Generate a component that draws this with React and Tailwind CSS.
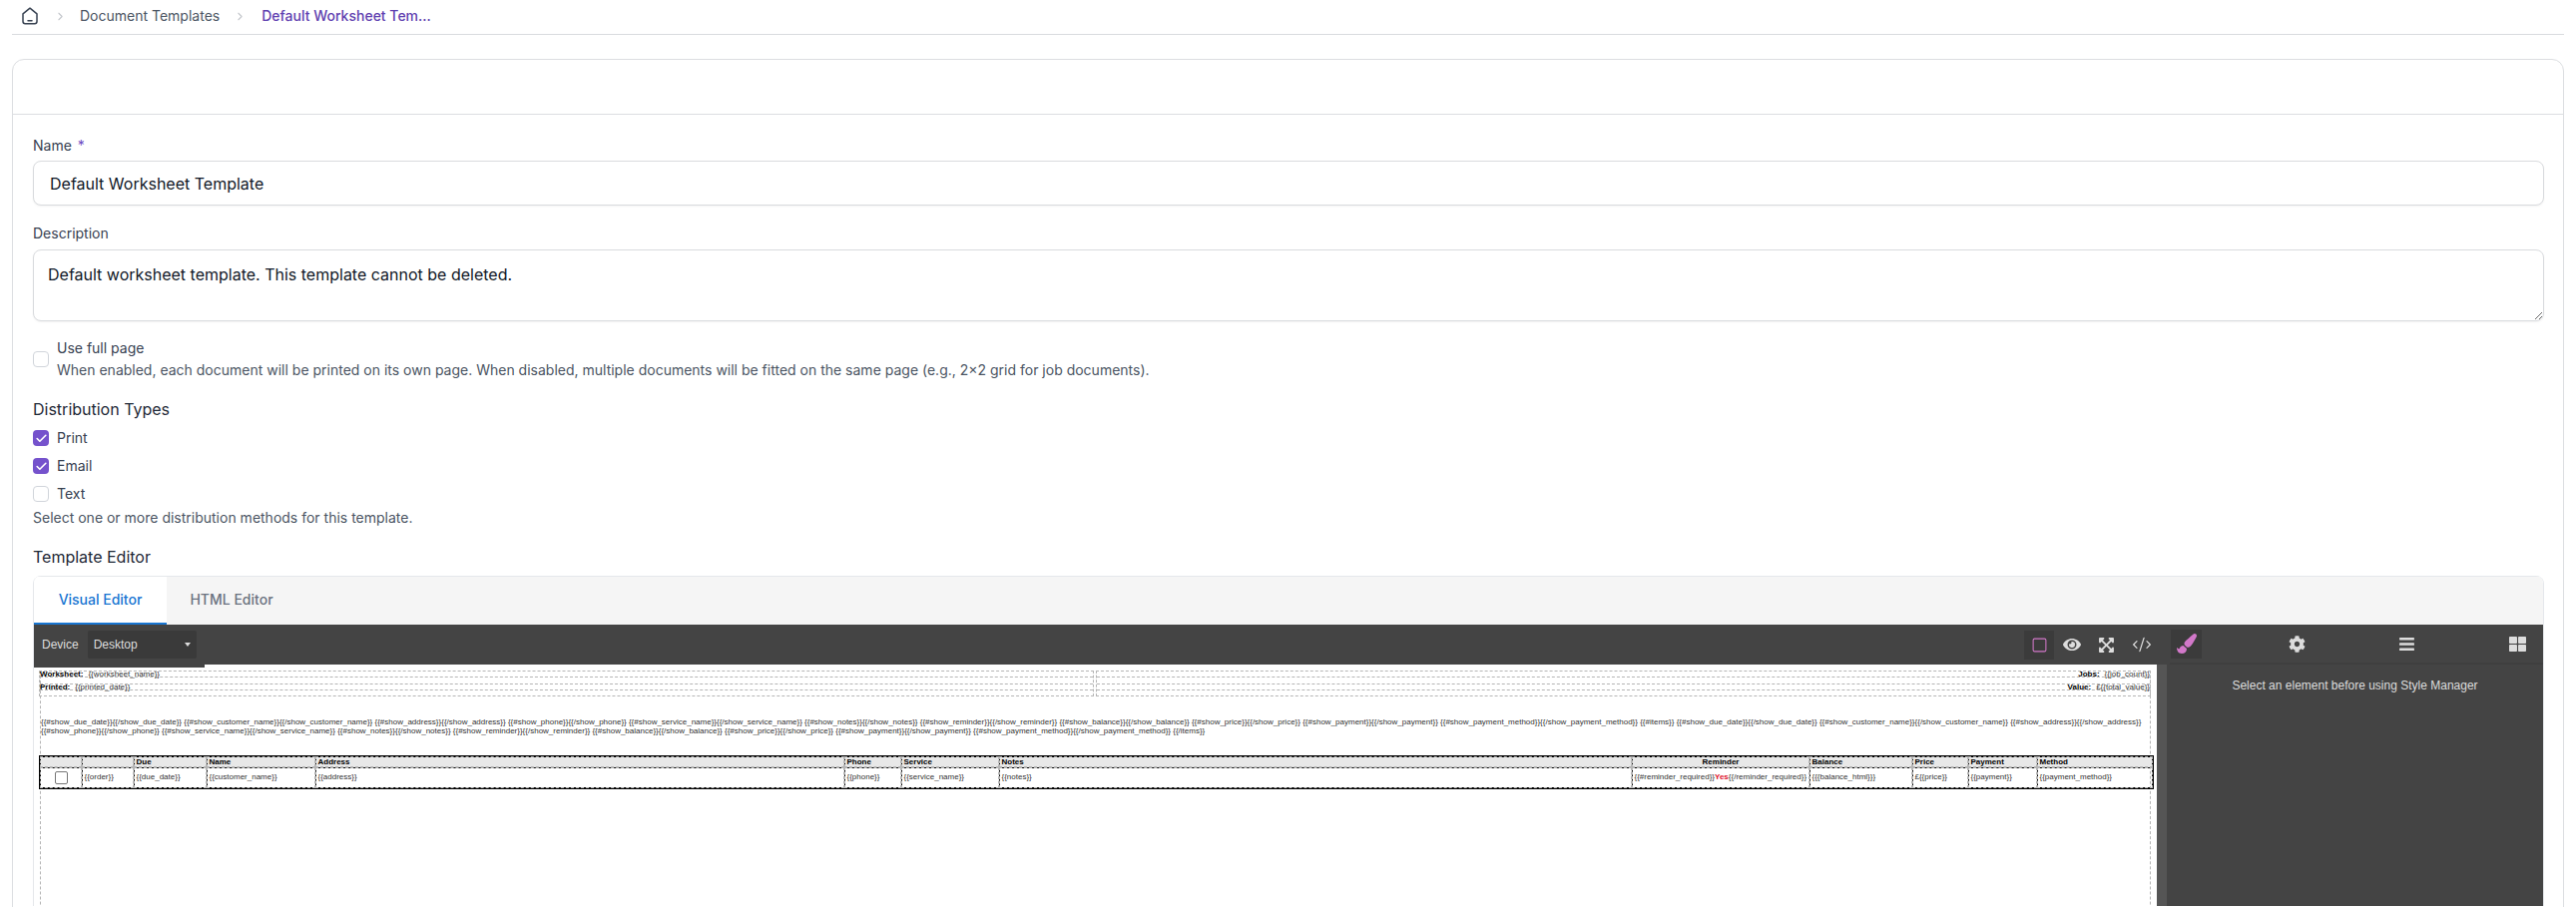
import React from 'react';
import { ChevronRight, Check, Square, CodeXml } from 'lucide-react';
import { FaEye, FaExpandArrowsAlt, FaPaintBrush, FaCog, FaBars, FaThLarge } from 'react-icons/fa';

const sans = "font-['Inter',sans-serif]";
const arial = "font-['Liberation_Sans',sans-serif]";

const columns = [
  { title: '', width: 'w-[42px]', cell: null },
  { title: '', width: 'w-[52px]', cell: '{{order}}' },
  { title: 'Due', width: 'w-[73px]', cell: '{{due_date}}' },
  { title: 'Name', width: 'w-[109px]', cell: '{{customer_name}}' },
  { title: 'Address', width: 'w-[530px]', cell: '{{address}}' },
  { title: 'Phone', width: 'w-[57px]', cell: '{{phone}}' },
  { title: 'Service', width: 'w-[98px]', cell: '{{service_name}}' },
  { title: 'Notes', width: 'w-[634px]', cell: '{{notes}}' },
  { title: 'Reminder', width: 'w-[178px]', center: true },
  { title: 'Balance', width: 'w-[103px]', cell: '{{{balance_html}}}' },
  { title: 'Price', width: 'w-[56px]', cell: '£{{price}}' },
  { title: 'Payment', width: 'w-[69px]', cell: '{{payment}}' },
  { title: 'Method', width: 'w-[116px]', cell: '{{payment_method}}' },
];

const lineOne =
  '{{#show_due_date}}{{/show_due_date}} {{#show_customer_name}}{{/show_customer_name}} {{#show_address}}{{/show_address}} {{#show_phone}}{{/show_phone}} {{#show_service_name}}{{/show_service_name}} {{#show_notes}}{{/show_notes}} {{#show_reminder}}{{/show_reminder}} {{#show_balance}}{{/show_balance}} {{#show_price}}{{/show_price}} {{#show_payment}}{{/show_payment}} {{#show_payment_method}}{{/show_payment_method}} {{#items}} {{#show_due_date}}{{/show_due_date}} {{#show_customer_name}}{{/show_customer_name}} {{#show_address}}{{/show_address}}';
const lineTwo =
  '{{#show_phone}}{{/show_phone}} {{#show_service_name}}{{/show_service_name}} {{#show_notes}}{{/show_notes}} {{#show_reminder}}{{/show_reminder}} {{#show_balance}}{{/show_balance}} {{#show_price}}{{/show_price}} {{#show_payment}}{{/show_payment}} {{#show_payment_method}}{{/show_payment_method}} {{/items}}';

function HomeIcon() {
  return (
    <svg width="18" height="18" viewBox="0 0 18 18" fill="none" stroke="#374151" strokeWidth="1.5" strokeLinejoin="round" strokeLinecap="round">
      <path d="M2 6.8 9 1.2l7 5.6v7.7a2.2 2.2 0 0 1-2.2 2.2H4.200a2.200 2.200 0 0 1-2.200-2.200z" />
      <path d="M7 13.800h4" />
    </svg>
  );
}

function Box({ checked }) {
  if (checked) {
    return (
      <span className="flex h-4 w-4 items-center justify-center rounded-[4px] bg-[#7552cc]">
        <Check size={13} strokeWidth={3} color="#fff" />
      </span>
    );
  }
  return <span className="h-4 w-4 rounded-[4px] border border-[#d1d5db] bg-white" />;
}

function CheckRow({ label, checked }) {
  return (
    <label className="flex h-5 items-center gap-2 text-sm text-[#374151]">
      <Box checked={checked} />
      <span>{label}</span>
    </label>
  );
}

function SummaryCell({ rows }) {
  return (
    <div className="h-[26px] flex-1 border border-dashed border-[#b5b5b5]">
      {rows.map((row) => (
        <div key={row.label} className="h-[13px] border-b border-dashed border-[#b5b5b5] last:h-[11px] last:border-b-0">
          <div className={`flex h-[6px] items-center gap-[5px] border-b border-dashed border-[#b5b5b5] leading-[6px] ${row.right ? 'justify-end' : ''}`}>
            <b className="text-black">{row.label}</b>
            <span>{row.value}</span>
          </div>
        </div>
      ))}
    </div>
  );
}

function WorksheetCanvas() {
  return (
    <div className={`min-w-0 flex-1 overflow-hidden bg-white px-[6px] pt-[6px] ${arial} text-[8px] text-[#333]`}>
      <div className="h-[300px] border-x border-dashed border-[#b5b5b5]">
        <div className="-ml-[2px] flex w-[2116px] gap-[2px]">
          <SummaryCell rows={[
            { label: 'Worksheet:', value: '{{worksheet_name}}' },
            { label: 'Printed:', value: '{{printed_date}}' },
          ]} />
          <SummaryCell rows={[
            { label: 'Jobs:', value: '{{job_count}}', right: true },
            { label: 'Value:', value: '£{{total_value}}', right: true },
          ]} />
        </div>
        <div className="mt-[21px] whitespace-nowrap leading-[9px]">
          <div>{lineOne}</div>
          <div>{lineTwo}</div>
        </div>
        <table className="-ml-[2px] mt-[20px] w-[2117px] table-fixed border-collapse border-2 border-black">
          <thead>
            <tr className="h-[11px] bg-[#e8e8e8]">
              {columns.map((col, i) => (
                <th
                  key={i}
                  className={`${col.width} overflow-hidden border border-black px-[2px] py-0 text-[8px] leading-[9px] font-bold text-black outline-1 -outline-offset-1 outline-dashed outline-[#b5b5b5] ${col.center ? 'text-center' : 'text-left'}`}
                >
                  {col.title}
                </th>
              ))}
            </tr>
          </thead>
          <tbody>
            <tr className="h-[21px]">
              {columns.map((col, i) => (
                <td key={i} className="overflow-hidden border border-black px-[2px] py-0 whitespace-nowrap outline-1 -outline-offset-1 outline-dashed outline-[#b5b5b5]">
                  {i === 0 ? (
                    <span className="mx-auto block h-[13px] w-[13px] rounded-[2px] border border-[#777] bg-white" />
                  ) : col.center ? (
                    <span>
                      {'{{#reminder_required}}'}
                      <b className="text-[#e0102a]">Yes</b>
                      {'{{/reminder_required}}'}
                    </span>
                  ) : (
                    col.cell
                  )}
                </td>
              ))}
            </tr>
          </tbody>
        </table>
      </div>
    </div>
  );
}

function Editor() {
  return (
    <div className={`flex h-[282px] flex-col bg-[#444444] ${arial}`}>
      <div className="flex h-[40px] shrink-0 items-start">
        <div className="relative z-10 flex h-[43px] w-[171px] items-center gap-[9px] bg-[#444444] pl-[8px] pb-[3px] text-[12px] text-[#dddddd]">
          <span>Device</span>
          <div className="flex h-[28px] w-[109px] items-center justify-between rounded-[2px] bg-[#3a3a3a] px-[6px]">
            <span>Desktop</span>
            <span className="h-0 w-0 border-x-[3px] border-t-[4px] border-x-transparent border-t-[#dddddd]" />
          </div>
        </div>
        <div className="flex h-full flex-1 items-center justify-end pr-[11px]">
          <span className="flex h-[29px] w-[30px] items-center justify-center bg-[#3b3b3b]">
            <Square size={17} color="#d278c9" strokeWidth={1.5} />
          </span>
          <span className="flex w-[35px] justify-center text-[#dddddd]"><FaEye size={18} /></span>
          <span className="flex w-[35px] justify-center text-[#dddddd]"><FaExpandArrowsAlt size={17} /></span>
          <span className="flex w-[35px] justify-center text-[#dddddd]"><CodeXml size={20} strokeWidth={1.5} /></span>
        </div>
        <div className="flex h-full w-[374px] shrink-0 items-center border-b-2 border-[#3f3f3f] pl-px text-[#dddddd]">
          <span className="flex h-[29px] w-[31px] items-center justify-center bg-[#3b3b3b]">
            <FaPaintBrush size={20} color="#d278c9" />
          </span>
          <span className="ml-[87px]"><FaCog size={17} /></span>
          <span className="ml-[93px]"><FaBars size={17} /></span>
          <span className="ml-[94px]"><FaThLarge size={17} /></span>
        </div>
      </div>
      <div className="flex min-h-0 flex-1">
        <WorksheetCanvas />
        <div className="w-[10px] shrink-0 bg-[#555555]" />
        <div className="w-[377px] shrink-0 pt-[14px] text-center text-[12px] leading-[14px] text-[#dddddd]">
          Select an element before using Style Manager
        </div>
      </div>
    </div>
  );
}

export default function App() {
  return (
    <div className={`h-[909px] w-full overflow-hidden bg-white px-3 ${sans}`}>
      <nav className="flex h-[35px] items-center border-b border-[#d9dbde] pb-[2px] text-sm">
        <span className="ml-[9px]"><HomeIcon /></span>
        <ChevronRight size={13} color="#c4c7cc" className="ml-[15px]" />
        <span className="ml-[13px] text-[#4b5563]">Document Templates</span>
        <ChevronRight size={13} color="#c4c7cc" className="ml-[14px]" />
        <span className="ml-[15px] font-medium text-[#5f3fb0]">Default Worksheet Tem...</span>
      </nav>

      <div className="mt-[24px] h-[900px] rounded-t-xl border border-[#dcdee1]">
        <div className="h-[55px] border-b border-[#dcdee1]" />
        <div className="pl-[20px] pr-[19px] pt-[21px]">
          <div className="h-5 text-sm text-[#374151]">Name <span className="ml-[2px] text-[#6d4bc3]">*</span></div>
          <input
            readOnly
            value="Default Worksheet Template"
            className="mt-[5px] block h-[45px] w-full rounded-lg border border-[#d9dbde] bg-white px-4 text-base text-[#111827] shadow-xs"
          />
          <div className="mt-[18px] h-5 text-sm text-[#374151]">Description</div>
          <textarea
            readOnly
            value="Default worksheet template. This template cannot be deleted."
            className="mt-[6px] block h-[72px] w-full rounded-lg border border-[#d9dbde] bg-white px-[14px] py-[12px] text-base leading-6 text-[#111827] shadow-xs"
          />
          <div className="mt-[17px] flex items-center gap-2">
            <Box />
            <div className="text-sm">
              <div className="text-[#374151]">Use full page</div>
              <div className="mt-[2px] text-[#4b5563]">
                When enabled, each document will be printed on its own page. When disabled, multiple documents will be fitted on the same page (e.g., 2×2 grid for job documents).
              </div>
            </div>
          </div>
          <h3 className="mt-[17px] text-base text-[#1f2937]">Distribution Types</h3>
          <div className="mt-[7px] flex flex-col gap-2">
            <CheckRow label="Print" checked />
            <CheckRow label="Email" checked />
            <CheckRow label="Text" />
          </div>
          <p className="mt-[4px] text-sm text-[#4b5563]">Select one or more distribution methods for this template.</p>
          <h3 className="mt-[17px] text-base text-[#1f2937]">Template Editor</h3>

          <div className="mt-[7px] overflow-hidden rounded-t-lg border-x border-[#e5e7eb]">
            <div className="flex h-[49px] border-t border-[#e5e7eb] bg-[#f5f5f5] text-sm font-medium">
              <div className="flex w-[133px] items-center justify-center border-b-2 border-[#1976d2] bg-white text-[#1976d2]">Visual Editor</div>
              <div className="flex w-[130px] items-center justify-center pb-[2px] text-[#6b7280]">HTML Editor</div>
            </div>
            <Editor />
          </div>
        </div>
      </div>
    </div>
  );
}
